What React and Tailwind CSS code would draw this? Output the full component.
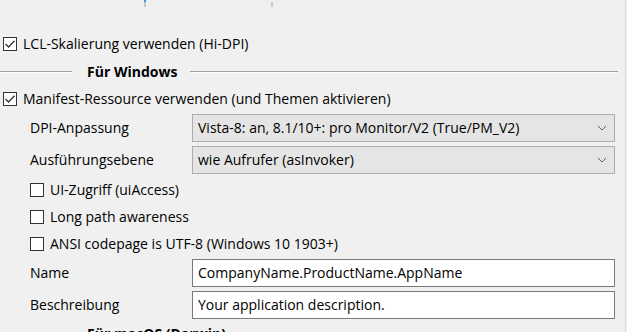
import { useState } from "react";

const Box = ({ checked }) => (
  <div className="w-[14px] h-[14px] border border-[#333333] bg-white flex items-center justify-center shrink-0">
    {checked && (
      <svg width="12" height="12" viewBox="0 0 12 12">
        <path d="M1.5 6 L4.6 9 L10.5 2.8" fill="none" stroke="#333333" strokeWidth="1.3" />
      </svg>
    )}
  </div>
);

const Check = ({ checked, label, className = "" }) => (
  <div className={`flex items-center gap-[6px] h-[20px] ${className}`}>
    <Box checked={checked} />
    <span>{label}</span>
  </div>
);

const Chevron = () => (
  <svg width="10" height="6" viewBox="0 0 10 6">
    <path d="M1 1 L5 5 L9 1" fill="none" stroke="#606060" strokeWidth="1" />
  </svg>
);

const Row = ({ label, children, className = "" }) => (
  <div className={`flex items-center ${className}`}>
    <div className="w-[192px] pl-[30px] shrink-0">{label}</div>
    {children}
  </div>
);

export default function App() {
  const [name] = useState("CompanyName.ProductName.AppName");
  const [desc] = useState("Your application description.");

  return (
    <div
      className="w-[627px] h-[332px] overflow-hidden bg-[#f0f0f0] text-black text-[14px] leading-[20px] flex"
      style={{ fontFamily: '"Open Sans", "Noto Sans", sans-serif' }}
    >
      <div className="w-[625px] flex flex-col">
        {/* trackbar ticks */}
        <div className="h-[8px] flex shrink-0">
          <div className="ml-[144px] w-[2px] flex flex-col">
            <div className="h-[2px] bg-[#3c8ee6]" />
            <div className="h-[5px] bg-[#c8c8c8]" />
          </div>
          <div className="ml-[125px] w-[2px] flex flex-col pt-[2px]">
            <div className="h-[5px] bg-[#c8c8c8]" />
          </div>
        </div>

        <Check checked label="LCL-Skalierung verwenden (Hi-DPI)" className="mt-[26px] pl-[3px]" />

        {/* group header */}
        <div className="mt-[8px] h-[20px] flex items-center shrink-0">
          <div className="w-[72px] flex flex-col">
            <div className="h-px bg-[#a0a0a0]" />
            <div className="h-px bg-white" />
          </div>
          <div className="w-[118px] pl-[15px] font-bold whitespace-nowrap">Für Windows</div>
          <div className="w-[428px] flex flex-col">
            <div className="h-px bg-[#a0a0a0]" />
            <div className="h-px bg-white" />
          </div>
        </div>

        <Check checked label="Manifest-Ressource verwenden (und Themen aktivieren)" className="mt-[7px] pl-[3px]" />

        <Row label="DPI-Anpassung" className="mt-[5px]">
          <div className="w-[423px] h-[28px] bg-[#e5e5e5] border border-[#adadad] flex items-center justify-between pl-[5px] pr-[7px]">
            <span>Vista-8: an, 8.1/10+: pro Monitor/V2 (True/PM_V2)</span>
            <Chevron />
          </div>
        </Row>
        <Row label="Ausführungsebene" className="mt-[4px]">
          <div className="w-[423px] h-[28px] bg-[#e5e5e5] border border-[#adadad] flex items-center justify-between pl-[5px] pr-[7px]">
            <span>wie Aufrufer (asInvoker)</span>
            <Chevron />
          </div>
        </Row>

        <Check label="UI-Zugriff (uiAccess)" className="mt-[6px] pl-[30px]" />
        <Check label="Long path awareness" className="mt-[7px] pl-[30px]" />
        <Check label="ANSI codepage is UTF-8 (Windows 10 1903+)" className="mt-[7px] pl-[30px]" />

        <Row label="Name" className="mt-[5px]">
          <div className="w-[423px] h-[28px] bg-white border border-[#7a7a7a] flex items-center pl-[5px]">
            {name}
          </div>
        </Row>
        <Row label="Beschreibung" className="mt-[4px]">
          <div className="w-[423px] h-[28px] bg-white border border-[#7a7a7a] flex items-center pl-[5px]">
            {desc}
          </div>
        </Row>

        <div className="mt-[5px] pl-[87px] font-bold shrink-0">Für macOS (Darwin)</div>
      </div>
      <div className="w-px bg-[#dcdcdc]" />
    </div>
  );
}
